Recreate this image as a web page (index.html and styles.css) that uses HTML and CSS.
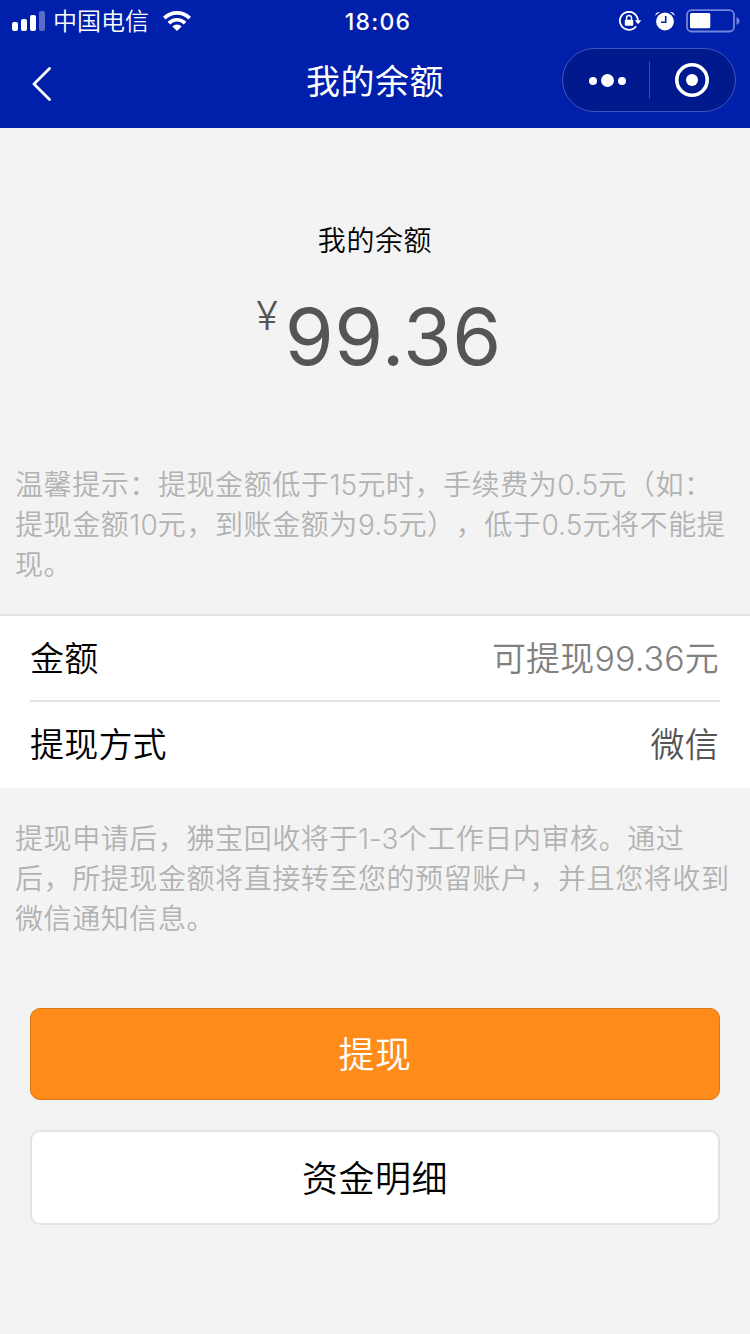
FILE: index.html
```html
<!DOCTYPE html>
<html lang="zh-CN">
<head>
<meta charset="utf-8">
<title>我的余额</title>
<link rel="stylesheet" href="styles.css">
</head>
<body>
<header class="header">
  <div class="status">
    <div class="status-left">
      <svg class="signal" width="33" height="20" viewBox="0 0 33 20" fill="#fff">
        <rect x="0" y="11" width="6" height="9" rx="2"/>
        <rect x="9" y="8" width="6" height="12" rx="2"/>
        <rect x="18" y="4" width="6" height="16" rx="2"/>
        <rect x="27" y="0" width="6" height="20" rx="2" opacity=".35"/>
      </svg>
      <span class="carrier">中国电信</span>
      <svg class="wifi" width="28" height="20" viewBox="0 0 28 20">
        <g fill="none" stroke="#fff" stroke-width="3.6">
          <path d="M1.3 7.1A18 18 0 0 1 26.700 7.100"/>
          <path d="M5.900 12.100A11.500 11.500 0 0 1 22.100 12.100"/>
        </g>
        <path d="M9.300 15.400A6.700 6.700 0 0 1 18.700 15.400L14 20z" fill="#fff"/>
      </svg>
    </div>
    <span class="clock">18:06</span>
    <div class="status-right">
      <svg class="lock" width="23" height="20" viewBox="0 0 23 20">
        <path d="M17.100 15.200A9 9 0 1 1 18.900 9.500" fill="none" stroke="#fff" stroke-width="1.800"/>
        <path d="M15.800 9.200H22.400L19.100 13.200z" fill="#fff"/>
        <rect x="5.800" y="8.800" width="8.400" height="6" rx="1" fill="#fff"/>
        <path d="M7.500 9.200V7a2.500 2.500 0 0 1 5 0v2.200" fill="none" stroke="#fff" stroke-width="1.400"/>
      </svg>
      <svg class="alarm" width="20" height="20" viewBox="0 0 20 20">
        <circle cx="10" cy="10.500" r="8.900" fill="#fff"/>
        <path d="M.2 4.800A4.200 4.200 0 0 1 5 1zM19.800 4.800A4.200 4.200 0 0 0 15 1z" fill="#fff"/>
        <path d="M10.700 5v6.300H6" fill="none" stroke="#001faa" stroke-width="1.600"/>
      </svg>
      <svg class="battery" width="54" height="24" viewBox="0 0 54 24">
        <rect x="1" y="1.200" width="47" height="21.300" rx="4.500" fill="none" stroke="#7385da" stroke-width="1.800"/>
        <rect x="4" y="4" width="20.300" height="15.300" rx="1.500" fill="#fff"/>
        <path d="M50.500 8.200q3 1 3 3.800t-3 3.800z" fill="#7385da"/>
      </svg>
    </div>
  </div>
  <div class="nav">
    <svg class="back" width="20" height="34" viewBox="0 0 20 34" fill="none" stroke="#fff" stroke-width="2.800" stroke-linecap="round" stroke-linejoin="round"><path d="M17.500 1.500L2 17l15.500 15.500"/></svg>
    <h1 class="title">我的余额</h1>
    <div class="capsule">
      <svg class="dots" width="38" height="14" viewBox="0 0 38 14" fill="#fff"><circle cx="4" cy="7" r="4"/><circle cx="18.500" cy="6.500" r="6.500"/><circle cx="33" cy="7" r="4"/></svg>
      <span class="capsule-line"></span>
      <svg class="close" width="34" height="34" viewBox="0 0 34 34"><circle cx="17" cy="17" r="15.200" fill="none" stroke="#fff" stroke-width="3.600"/><circle cx="17" cy="17" r="6" fill="#fff"/></svg>
    </div>
  </div>
</header>
<main class="page">
  <section class="balance">
    <h2 class="balance-label">我的余额</h2>
    <div class="balance-value"><span class="yen">¥</span><span class="amount">99.36</span></div>
  </section>
  <p class="note tip">温馨提示：提现金额低于<span class="num">15</span>元时，手续费为<span class="num">0.5</span>元（如：<br>提现金额<span class="num">10</span>元，到账金额为<span class="num">9.5</span>元），低于<span class="num">0.5</span>元将不能提<br>现。</p>
  <section class="cells">
    <div class="cell"><span>金额</span><span class="avail">可提现<span class="num">99.36</span>元</span></div>
    <div class="cell"><span>提现方式</span><span class="method">微信</span></div>
  </section>
  <p class="note audit">提现申请后，狒宝回收将于<span class="num">1-3</span>个工作日内审核。通过<br>后，所提现金额将直接转至您的预留账户，并且您将收到<br>微信通知信息。</p>
  <div class="actions">
    <button class="btn primary">提现</button>
    <button class="btn plain">资金明细</button>
  </div>
</main>
</body>
</html>
```
FILE: styles.css
```css
* { box-sizing: border-box; }
body {
  margin: 0;
  width: 750px;
  height: 1334px;
  overflow: hidden;
  background: #f3f3f3;
  color: #000;
  font-family: Inter, "Noto Sans CJK SC", sans-serif;
  font-weight: 350;
  text-spacing-trim: space-all;
}
svg { display: block; flex: none; }
h1, h2, p { margin: 0; font-weight: inherit; }
.header { height: 128px; background: #001faa; color: #fff; }
.status {
  height: 40px;
  padding: 0 10px 0 12px;
  display: grid;
  grid-template-columns: 1fr auto 1fr;
  align-items: center;
}
.status-left, .status-right { display: flex; align-items: center; }
.status-right { justify-content: flex-end; }
.carrier { margin: 2px 0 0 8px; font-size: 24px; line-height: 40px; }
.wifi { margin-left: 14px; }
.clock { font-size: 23px; font-weight: 500; letter-spacing: 1.2px; margin: 1px 0 0 4px; line-height: 40px; }
.alarm { margin-left: 13px; }
.battery { margin-left: 11px; }
.nav {
  height: 88px;
  padding: 0 14px 8px 32px;
  display: grid;
  grid-template-columns: 174px 1fr 174px;
  align-items: center;
}
.back { margin-top: 8px; }
.title { padding: 0 18px 2px 0; text-align: center; font-size: 34px; font-weight: 400; letter-spacing: .5px; }
.capsule {
  width: 174px;
  height: 64px;
  border: 1px solid #4054bd;
  border-radius: 32px;
  background: #001a8e;
  display: flex;
  align-items: center;
}
.dots { margin: 2px 0 0 26px; }
.capsule-line { width: 1px; height: 38px; margin-left: 22px; background: #3348ab; }
.close { margin-left: 25px; }
.balance { height: 328px; padding-top: 92px; text-align: center; }
.balance-label { font-size: 28px; line-height: 42px; letter-spacing: .6px; }
.balance-value { display: flex; justify-content: center; align-items: flex-start; margin: 26px 0 0 8px; color: #555; }
.yen { font-size: 40px; line-height: 56px; font-weight: 300; }
.amount { margin-left: 7px; font-size: 79px; line-height: 96px; font-weight: 370; letter-spacing: .5px; }
.note { padding: 0 0 0 15px; color: #b2b2b2; font-size: 28px; line-height: 40px; letter-spacing: .58px; white-space: nowrap; }
.tip { height: 158px; padding-top: 9px; }
.num { letter-spacing: .1px; }
.cells { height: 174px; border-top: 2px solid #e3e3e3; background: #fff; padding: 0 30px; }
.cell { height: 84px; padding-top: 1px; display: flex; justify-content: space-between; align-items: center; font-size: 34px; line-height: 48px; letter-spacing: .2px; }
.cell + .cell { height: 88px; padding: 0; border-top: 2px solid #e3e3e3; }
.avail { color: #808080; margin-right: 1px; }
.method { color: #555; margin-right: 1px; }
.audit { height: 220px; padding-top: 31px; }
.actions { display: flex; flex-direction: column; gap: 30px; padding: 0 30px; }
.btn { display: block; width: 100%; padding: 2px 0 0; border-radius: 10px; font-family: inherit; font-weight: inherit; font-size: 36px; line-height: 50px; letter-spacing: .5px; }
.primary { height: 92px; border: 1px solid #d97719; background: #ff8c1a; color: #fff; }
.plain { height: 95px; border: 2px solid #e3e3e3; background: #fff; color: #000; }
```
